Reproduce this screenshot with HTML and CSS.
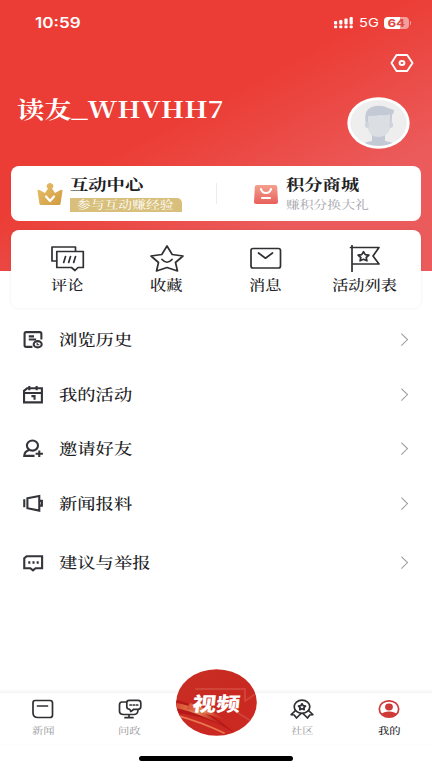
FILE: index.html
```html
<!DOCTYPE html>
<html lang="zh-CN">
<head>
<meta charset="utf-8">
<title>我的</title>
<link rel="stylesheet" href="styles.css">
</head>
<body>
<main class="screen">
  <header class="status">
    <span class="wide time">10:59</span>
    <div class="signals">
      <svg width="19" height="12" viewBox="0 0 19 12" fill="#fff"><rect y="4" width="3.2" height="3.4" rx="1"/><rect x="5.2" y="3" width="3.2" height="4.4" rx="1"/><rect x="10.4" y="1.5" width="3.2" height="5.9" rx="1"/><rect x="15.6" width="3.2" height="7.4" rx="1"/><rect y="8.5" width="3.2" height="2.8" rx="1"/><rect x="5.2" y="8.5" width="3.2" height="2.8" rx="1"/><rect x="10.4" y="8.5" width="3.2" height="2.8" rx="1"/><rect x="15.6" y="8.5" width="3.2" height="2.8" rx="1"/></svg>
      <span class="wide net">5G</span>
      <span class="battery"><b class="wide">64</b></span><i class="cap"></i>
    </div>
  </header>
  <div class="settings">
    <svg width="24" height="18" viewBox="0 0 24 18" fill="none" stroke="#fff" stroke-width="1.9" stroke-linejoin="round"><path d="M6.5 1h10.7L22.5 9l-5.3 8H6.5L1.500 9z"/><ellipse cx="12" cy="9" rx="2.400" ry="1.900" stroke-width="2"/></svg>
  </div>
  <section class="profile">
    <h1><span class="wide">读友_WHVHH7</span></h1>
    <svg class="avatar" width="63" height="52" viewBox="0 0 63 52">
      <defs><clipPath id="face"><ellipse cx="31.500" cy="26" rx="28.300" ry="23"/></clipPath></defs>
      <ellipse cx="31.500" cy="26" rx="31.200" ry="25.700" fill="#fff"/><ellipse cx="31.500" cy="26" rx="28.300" ry="23" fill="#eeeeef"/>
      <g clip-path="url(#face)">
        <path d="M15 49q1-4 10-5v-6h13v6q9 1 11 5v3H15z" fill="#c4c9d6"/>
        <path d="M19 27q-3-14 6-17 9-3 16 1l6 2q0 3-2 5l-.5 9h-3V20H21v8z" fill="#c4c9d6"/>
        <path d="M21 19q8 0 13-1 6 1 9-1v15q-2 7-11 8-9 0-11-8z" fill="#dbdfe3"/><ellipse cx="20" cy="28" rx="2" ry="3" fill="#cfd4dc"/><ellipse cx="44" cy="28" rx="2" ry="3" fill="#cfd4dc"/>
      </g>
    </svg>
  </section>
  <section class="card promos">
    <div class="promo">
      <svg width="26" height="22" viewBox="0 0 26 22"><defs><linearGradient id="gold" x2="1" y2="1"><stop stop-color="#e8c16c"/><stop offset="1" stop-color="#d09a3f"/></linearGradient></defs><path d="M2.500 21L.500 8q0-2 2-1l5.500 3 3-4.500a3.200 3 0 1 1 4 0l3 4.500 5.500-3q2-1 2 1l-2 13q-.2 1-1.500 1H4q-1.300 0-1.500-1z" fill="url(#gold)"/><path d="M9 13.500l4 4.500 4-4.500" fill="none" stroke="#fff" stroke-width="2.200" stroke-linecap="round" stroke-linejoin="round"/></svg>
      <div class="promo-text"><strong class="wide">互动中心</strong><p class="tag"><span class="wide">参与互动赚经验</span></p></div>
    </div>
    <i class="divider"></i>
    <div class="promo">
      <svg width="26" height="22" viewBox="0 0 26 22"><defs><linearGradient id="coral" x2="0" y2="1"><stop stop-color="#f3a18e"/><stop offset="1" stop-color="#e85f5c"/></linearGradient></defs><path d="M4 2h18q2 0 2.200 1.500L25 19q.2 2-2.500 2h-19Q.8 21 1 19L1.800 3.500Q2 2 4 2z" fill="url(#coral)"/><path d="M8 6q1 4 5 4T18 6M9 15h8" fill="none" stroke="#fff" stroke-width="2.100" stroke-linecap="round"/></svg>
      <div class="promo-text"><strong class="wide">积分商城</strong><p class="sub"><span class="wide">赚积分换大礼</span></p></div>
    </div>
  </section>
  <nav class="card shortcuts">
    <a><svg width="34" height="27" viewBox="0 0 34 27"><path d="M5.500 16H1V2h23.500v4"/><path d="M5.800 6.500h26.500v16H27l-3 3-3.500-3H5.800zM14.500 11.500l-1.800 6M19.500 11.500l-1.800 6M24.500 11.500l-1.800 6"/></svg><span class="wide">评论</span></a>
    <a><svg width="34" height="27" viewBox="0 0 34 27"><path d="M17 1l5.200 8.500L33 11l-7.500 6.500L27.500 26 17 22.500 6.500 26l2-8.500L1 11l10.800-1.500zM12 14.500q5 5.500 10 0"/></svg><span class="wide">收藏</span></a>
    <a><svg width="34" height="27" viewBox="0 0 34 27"><rect x="2" y="3.500" width="29.500" height="19.500" rx="2"/><path d="M9.500 8l7 5.200L23.500 8"/></svg><span class="wide">消息</span></a>
    <a><svg width="34" height="27" viewBox="0 0 34 27"><path d="M4 .500V27M2.500 2.500H31L25 11l6 8H4"/><path d="M15.500 6.700l1.800 2.900 3.600.5-2.700 2.400.7 3.300-3.400-1.500-3.400 1.500.7-3.300-2.700-2.400 3.600-.5z" stroke-width="1.700"/></svg><span class="wide">活动列表</span></a>
  </nav>
  <ul class="menu">
    <li><svg width="20" height="18" viewBox="0 0 20 18"><path d="M9 16H3q-1.500 0-1.500-1.500v-11Q1.500 2 3 2h13q1.500 0 1.500 1.500V9M5.500 6h5M5.500 9h7"/><ellipse cx="14" cy="13.500" rx="3.800" ry="3"/><path d="M13.500 12v2h2" stroke-width="1.100"/></svg><span class="wide">浏览历史</span><i class="chevron"></i></li>
    <li><svg width="20" height="18" viewBox="0 0 20 18"><path d="M4 3h14v13.500H1V5.500zM1 7.500h17M6 1v4M13 1v4" /><path d="M8 10.500h3V14" /></svg><span class="wide">我的活动</span><i class="chevron"></i></li>
    <li><svg width="20" height="18" viewBox="0 0 20 18"><ellipse cx="9" cy="6.200" rx="5.300" ry="4.800"/><path d="M6 10.500q-4.500 1-4.800 5.500H11M15.500 11v6M12 14h7"/></svg><span class="wide">邀请好友</span><i class="chevron"></i></li>
    <li><svg width="20" height="18" viewBox="0 0 20 18"><path d="M1.200 5v7.500M4.200 4L15.500 1.800v14L4.200 13.500zM16 6.500h2V11h-2"/></svg><span class="wide">新闻报料</span><i class="chevron"></i></li>
    <li><svg width="20" height="18" viewBox="0 0 20 18"><path d="M3.500 3h14.700v11.500H12l-2.500 2-2.500-2H1.200V5z"/><path d="M5 9h2M9 9h2M13 9h2" stroke-width="2.200"/></svg><span class="wide">建议与举报</span><i class="chevron"></i></li>
  </ul>
  <footer class="tabs">
    <a><svg width="24" height="20" viewBox="0 0 24 20"><path d="M4 1.500h15q2.500 0 2.500 2.500v12q0 2.500-2.500 2.500H7q-5 0-5-4.500V4q0-2.500 2-2.500zM6.500 7h10"/></svg><span class="wide">新闻</span></a>
    <a><svg width="24" height="20" viewBox="0 0 24 20"><path d="M8 3H4Q1.500 3 1.500 6v6q0 3.500 4 3.500h10.500q3.500 0 4-4M11 16v2.500M7 18.700h8"/><path d="M11 1.300h9q2.800 0 2.800 2.500v4q0 2.500-3 2.500h-4l-3 2.200-1-2.200q-3 0-3-2.500v-4q0-2.500 2.200-2.500z"/><path d="M12 6h1.300M15.200 6h1.300M18.400 6h1.300"/></svg><span class="wide">问政</span></a>
    <a class="video"><svg width="81" height="67" viewBox="0 0 81 67">
      <defs><linearGradient id="red" x2="1" y2="1"><stop stop-color="#c92f23"/><stop offset=".5" stop-color="#c82921"/><stop offset="1" stop-color="#cd2823"/></linearGradient><linearGradient id="glow"><stop stop-color="#d94b31"/><stop offset=".45" stop-color="#e28a5a"/><stop offset="1" stop-color="#d12d20" stop-opacity="0"/></linearGradient><clipPath id="disc"><ellipse cx="40.500" cy="33.500" rx="40.300" ry="33.300"/></clipPath></defs>
      <g clip-path="url(#disc)"><path fill="url(#red)" d="M0 0h81v67H0z"/><path d="M0 31q25 4 60 34Q33 47 0 44z" fill="#b71918"/><path d="M0 34q23 3 49 24Q24 44 0 39z" fill="url(#glow)"/><path d="M14 34q20 6 37 18Q31 44 10 40z" fill="url(#glow)"/><path d="M0 46q28 8 48 18" fill="none" stroke="#e97850"/><path d="M20 20h49v12l9-6M59 42l16 10" fill="none" stroke="#dc6355" stroke-width="2" opacity=".45"/></g></svg><b>视频</b></a>
    <a><svg width="24" height="20" viewBox="0 0 24 20"><ellipse cx="12" cy="7.800" rx="7.800" ry="6.600"/><path d="M12 4.800l1.200 1.900 2.300.4-1.600 1.500.3 2-2.200-.9-2.200.9.300-2-1.600-1.500 2.300-.4z"/><path d="M5.500 11.500L1.200 15.700l3 .300L6.500 19l4.500-4.500M18.500 11.500l4.300 4.200-3 .300-2.300 3-4.500-4.500"/></svg><span class="wide">社区</span></a>
    <a class="active"><svg width="24" height="20" viewBox="0 0 24 20"><defs><clipPath id="me"><ellipse cx="12" cy="10" rx="9.800" ry="8.300"/></clipPath></defs><ellipse cx="12" cy="10" rx="9.700" ry="8.200" stroke="#ce3a38"/><ellipse cx="12" cy="8" rx="3.900" ry="3.400" fill="#ce3a38" stroke="none"/><path clip-path="url(#me)" d="M3 16q3-3.500 9-3.500t9 3.500v4H3z" fill="#ce3a38" stroke="none"/></svg><span class="wide">我的</span></a>
  </footer>
  <div class="home"></div>
</main>
</body>
</html>
```

FILE: styles.css
```css
* { box-sizing: border-box; }
body { margin: 0; }
h1, p, ul { margin: 0; padding: 0; }
svg { display: block; flex: none; }

.screen {
  width: 432px;
  height: 768px;
  display: flex;
  flex-direction: column;
  overflow: hidden;
  color: #202022;
  font-family: "Noto Serif CJK SC", "Noto Serif SC", "Source Han Serif SC", "Noto Sans CJK SC", serif;
  background: linear-gradient(152deg, #eb3d35 43%, #eb5b5b 75%) 0 0 / 100% 271px no-repeat #fff;
}

/* Wide lettering keeps its left edge unless a parent centres it. */
.wide {
  display: inline-block;
  white-space: nowrap;
  transform: scaleX(1.22);
  transform-origin: left center;
}

.status {
  height: 45px;
  padding: 0 21px 0 35px;
  display: flex;
  align-items: center;
  justify-content: space-between;
  color: #fff;
  font-family: Inter, sans-serif;
}
.time { font-size: 14px; font-weight: 600; }
.signals { display: flex; align-items: center; }
.net { width: 25px; margin-left: 6px; font-size: 12px; font-weight: 400; }
.battery {
  width: 25px;
  height: 12px;
  border-radius: 4px;
  display: flex;
  align-items: center;
  justify-content: center;
  background: linear-gradient(90deg, #fff 64%, #f3a09d 64%);
  color: #df4845;
  font-size: 11px;
  line-height: 12px;
}
.battery .wide { transform-origin: center; }
.cap { width: 1.5px; height: 4px; margin-left: 1px; border-radius: 0 2px 2px 0; background: #f3a09d; }

.settings { height: 36px; padding: 9px 18px 0 0; display: flex; justify-content: flex-end; }
.profile { height: 85px; padding: 0 22px 0 17px; display: flex; justify-content: space-between; }
h1 { height: 55px; display: flex; align-items: center; color: #fff; font-size: 22.200px; line-height: 1; font-weight: 700; }
h1 .wide { transform: scaleX(1.227); }
.avatar { margin-top: 16px; }

.card { margin: 0 11px; border-radius: 8px; background: #fff; }
.promos { height: 55px; display: flex; align-items: center; flex: none; }
.promo { width: 205px; padding-left: 26px; display: flex; gap: 7px; }
.promo > svg { margin-top: 8px; }
.promo-text { display: flex; flex-direction: column; align-items: flex-start; }
.promo strong { height: 20px; font-size: 15px; line-height: 17px; font-weight: 700; }
.promo p { height: 14px; margin-top: 3px; font-size: 11.3px; line-height: 13px; }
.tag { width: 112px; padding-left: 7px; border-radius: 0 5px 0 0; background: #d8bf7b; color: #fff; }
.sub { color: #a4a4ab; }
.divider { width: 1px; height: 21px; margin-right: -1px; background: #ececee; }
.promo + .divider + .promo { padding-left: 37px; }

.shortcuts {
  height: 78px;
  margin-top: 9px;
  padding-top: 15px;
  display: flex;
  flex: none;
  padding-left: 7px;
  padding-right: 7px;
  box-shadow: 0 0 4px rgba(0, 0, 0, .06);
}
.shortcuts a { flex: 1; display: flex; flex-direction: column; align-items: center; }
.shortcuts svg, .menu svg, .tabs svg { fill: none; stroke: #303034; stroke-width: 1.7; stroke-linejoin: round; stroke-linecap: round; }
.shortcuts span { margin-top: 3px; font-size: 13.3px; line-height: 19px; font-weight: 500; transform-origin: center; }

.menu { list-style: none; padding-top: 4px; flex: none; }
.menu li { height: 54.700px; padding: 0 23px 0 22.500px; display: flex; align-items: center; }
.menu li:last-child { height: 63px; }
.menu svg { width: 21px; height: 19px; stroke: #34353a; stroke-width: 2; stroke-linejoin: miter; stroke-linecap: butt; }
.menu span { margin-left: 15px; font-size: 15px; line-height: 20px; font-weight: 500; position: relative; top: -.5px; }
.chevron { width: 8.500px; height: 8.500px; margin-left: auto; border: solid #98989b; border-width: 1.500px 1.500px 0 0; transform: translateX(-3.500px) rotate(45deg); }

.tabs {
  height: 52px;
  margin-top: auto;
  padding-top: 6px;
  display: flex;
  flex: none;
  border-top: 1px solid #f4f4f4;
  box-shadow: 0 -1px 3px rgba(0, 0, 0, .05);
}
.tabs a { flex: 1; display: flex; flex-direction: column; align-items: center; color: #98989c; font-size: 9.300px; }
.tabs .wide { margin-top: 4.500px; line-height: 13px; transform-origin: center; }
.tabs .active { color: #202022; font-weight: 500; }
.tabs .video { position: relative; margin-top: -30px; }
.video svg { stroke: none; }
.video b {
  position: absolute;
  top: 20px;
  color: #fff;
  font: 900 19.500px/28px "Noto Sans CJK SC", sans-serif;
  transform: scaleX(1.22) skewX(-5deg);
}
.home { width: 154px; height: 5px; margin: 12px auto 7px; border-radius: 3px; background: #000; flex: none; }
```
